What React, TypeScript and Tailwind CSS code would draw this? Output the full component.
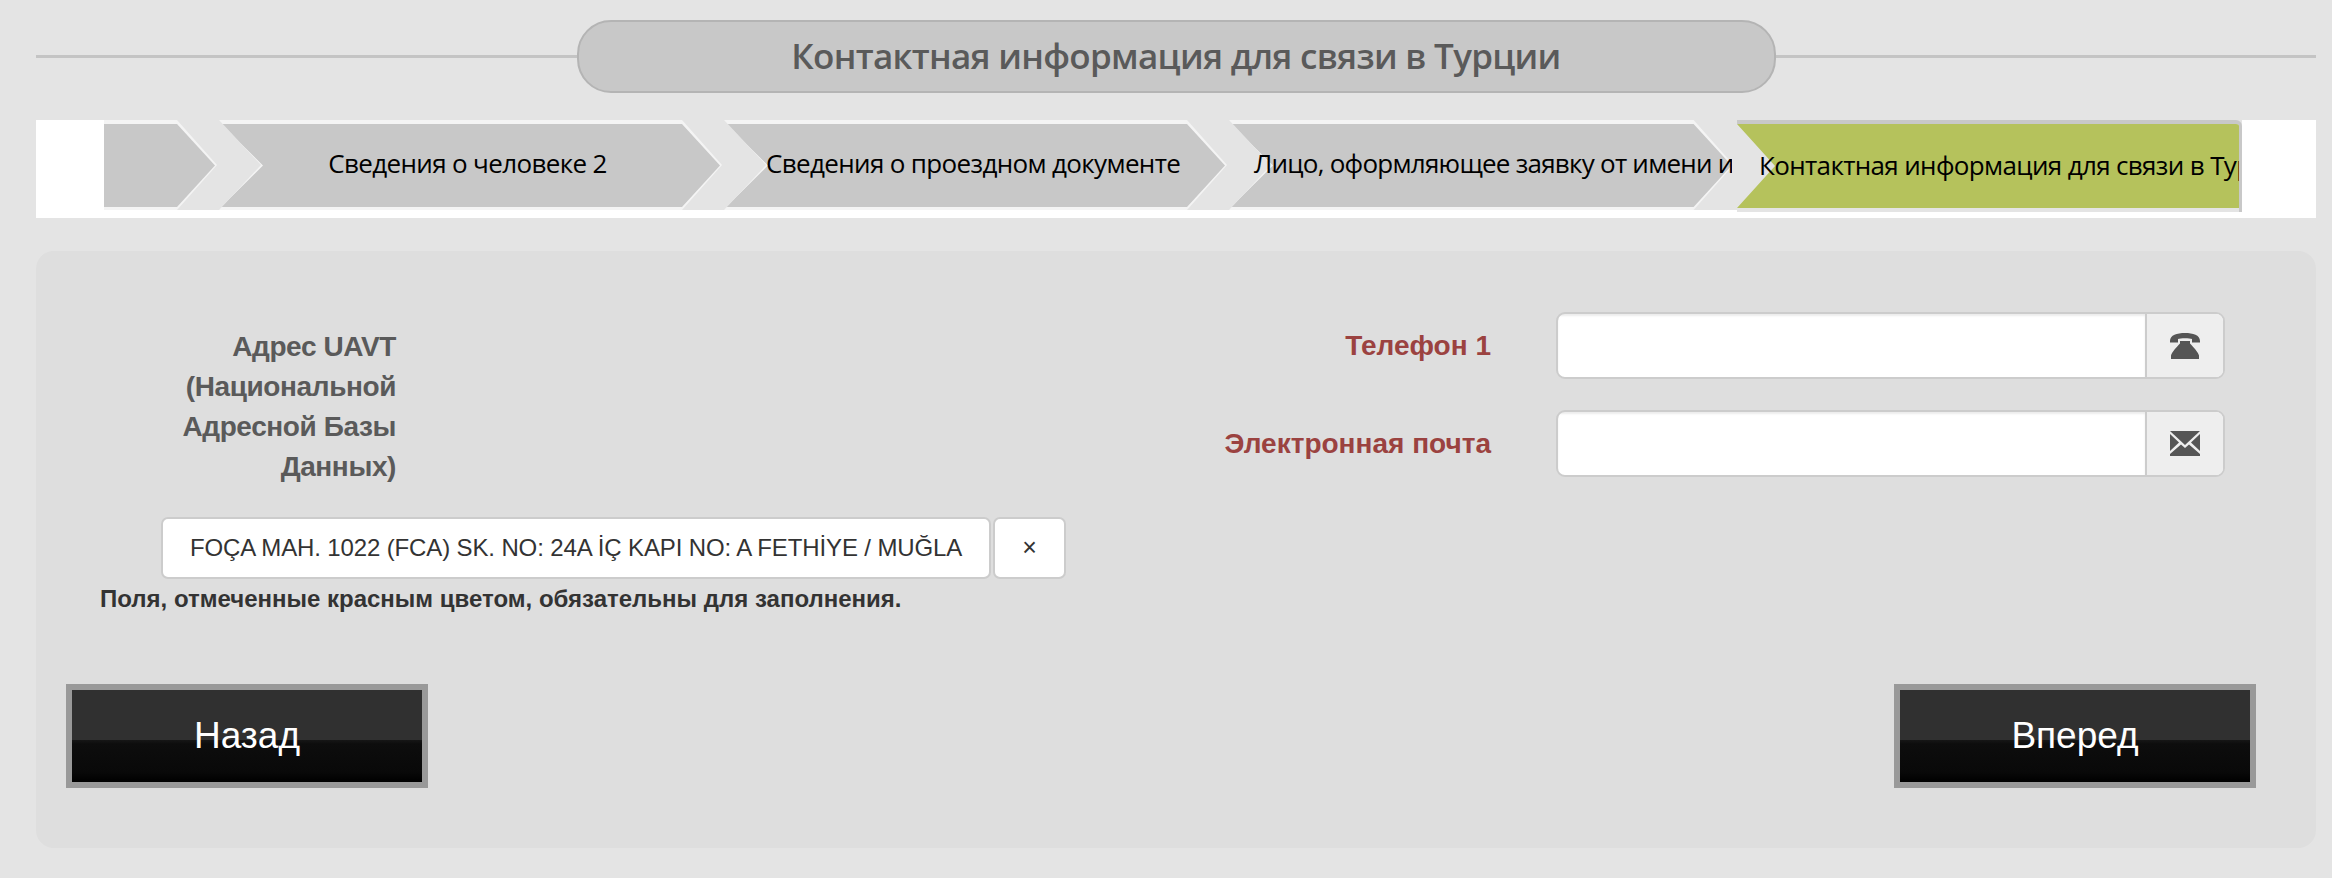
const STEPS = [
  { label: "Сведения о человеке 2", pad: "justify-center pl-[12px] pr-[18px] tracking-[-0.65px]" },
  { label: "Сведения о проездном документе", pad: "pl-[42px] tracking-[-0.65px]" },
  { label: "Лицо, оформляющее заявку от имени и", pad: "pl-[25px] tracking-[-0.75px]" },
];

function Chevron({ label, pad }: { label: string; pad: string }) {
  return (
    <div className="grid w-[503px] h-[90px] shrink-0 overflow-hidden">
      <div className="[grid-area:1/1] h-full bg-[#f4f4f4] [clip-path:polygon(0_0,calc(100%-40px)_0,100%_50%,calc(100%-40px)_100%,0_100%,42px_50%)] pt-[4px] pb-[3px]">
        <div className="h-full bg-[#c8c8c8] [clip-path:polygon(2px_0,calc(100%-40px)_0,calc(100%-2px)_50%,calc(100%-40px)_100%,2px_100%,44px_50%)]" />
      </div>
      <div
        className={`[grid-area:1/1] z-10 flex items-center pb-[3px] whitespace-nowrap text-black font-['Open_Sans',sans-serif] text-[26px] ${pad}`}
      >
        {label}
      </div>
    </div>
  );
}

function InputWithAddon({ label, icon }: { label: string; icon: React.ReactNode }) {
  return (
    <div className="flex items-center">
      <label className="w-[304px] text-right font-bold text-[28px] text-[#9b4240]">
        {label}
      </label>
      <div className="ml-[65px] flex h-[67px] w-[669px] rounded-[9px] border-2 border-[#cccccc] bg-white overflow-hidden">
        <input className="flex-1 min-w-0 shadow-[inset_0_2px_2px_rgba(0,0,0,0.08)] outline-none" />
        <div className="w-[78px] shrink-0 flex items-center justify-center bg-[#eeeeee] border-l-2 border-[#cccccc]">
          {icon}
        </div>
      </div>
    </div>
  );
}

function NavButton({ children }: { children: React.ReactNode }) {
  return (
    <button className="w-[362px] h-[104px] border-[6px] border-[#999999] text-white text-[37px] bg-[linear-gradient(to_bottom,#303030_0,#303030_50px,#161616_50px,#0d0d0d_54px,#090909_82px,#000000_92px)]">
      {children}
    </button>
  );
}

export default function App() {
  return (
    <div className="min-h-screen bg-[#e4e4e4] pt-[20px] pl-[36px] pr-[16px] font-['Liberation_Sans',Arial,sans-serif]">
      {/* Title */}
      <div className="flex items-center">
        <div className="flex-1 h-[3px] bg-[#c4c4c4]" />
        <h1 className="w-[1199px] h-[73px] shrink-0 rounded-[34px] border-2 border-[#b4b4b4] bg-[#c8c8c8] flex items-center justify-center text-[#5a5a5a] font-['Open_Sans',sans-serif] font-semibold text-[35px] tracking-[-0.7px]">
          Контактная информация для связи в Турции
        </h1>
        <div className="flex-1 h-[3px] bg-[#c4c4c4]" />
      </div>

      {/* Steps */}
      <div className="mt-[27px] h-[98px] bg-white pl-[68px] pr-[74px]">
        <div className="flex h-[92px] items-start overflow-hidden gap-[2px] bg-[linear-gradient(to_bottom,#e4e4e4_90px,#ffffff_90px)]">
          <div className="w-[113px] h-[90px] shrink-0 bg-[#f4f4f4] [clip-path:polygon(0_0,calc(100%-40px)_0,100%_50%,calc(100%-40px)_100%,0_100%)] pt-[4px] pb-[3px]">
            <div className="h-full bg-[#c8c8c8] [clip-path:polygon(0_0,calc(100%-40px)_0,calc(100%-2px)_50%,calc(100%-40px)_100%,0_100%)]" />
          </div>
          {STEPS.map((s) => (
            <Chevron key={s.label} label={s.label} pad={s.pad} />
          ))}
          {/* Active step */}
          <div className="grid flex-1 min-w-0 h-[92px] ml-[3px] overflow-hidden rounded-tr-[6px] border-t-[4px] border-r-[3px] border-[#c8c8c8] bg-[#e4e4e4]">
            <div className="[grid-area:1/1] h-[84px] bg-[#b5c25c] [clip-path:polygon(0_0,calc(100%-36px)_0,100%_50%,calc(100%-36px)_100%,0_100%,38px_50%)]" />
            <div className="[grid-area:1/1] z-10 flex h-[84px] items-center whitespace-nowrap pb-[1px] pl-[22px] text-black font-['Open_Sans',sans-serif] text-[26px] tracking-[-0.65px]">
              Контактная информация для связи в Турции
            </div>
          </div>
        </div>
      </div>

      {/* Form panel */}
      <div className="mt-[33px] h-[597px] rounded-[18px] bg-[#dedede]">
        <div className="flex h-[433px]">
          <div className="w-[1151px] shrink-0 pt-[76px]">
            <div className="ml-[120px] w-[240px] text-right font-bold text-[28px] leading-[40px] text-[#5a5a5a] tracking-[-0.4px]">
              Адрес UAVT (Национальной Адресной Базы Данных)
            </div>
            <div className="mt-[30px] ml-[125px] flex h-[62px] gap-[2px]">
              <div className="w-[830px] rounded-[7px] border-2 border-[#cccccc] bg-white flex items-center justify-center whitespace-nowrap text-[24px] text-[#333333] tracking-[-0.13px]">
                FOÇA MAH. 1022 (FCA) SK. NO: 24A İÇ KAPI NO: A FETHİYE / MUĞLA
              </div>
              <button className="w-[73px] rounded-[7px] border-2 border-[#cccccc] bg-white text-[25px] text-[#333333]">
                ×
              </button>
            </div>
            <p className="ml-[64px] mt-[6px] font-bold text-[24px] leading-[27px] text-[#333333]">
              Поля, отмеченные красным цветом, обязательны для заполнения.
            </p>
          </div>
          <div className="pt-[61px] flex flex-col gap-[31px]">
            <InputWithAddon
              label="Телефон 1"
              icon={
                <svg width="32" height="27" viewBox="0 0 32 27" fill="#555555">
                  <path d="M1 9C1 3 8 1 16 1s15 2 15 8v1.5h-8V7c-2-1-12-1-14 0v3.5H1z" />
                  <path d="M11 9h10v2.5c3 3 8 8.500 9 12V27H2v-3.500c1-3.500 6-9 9-12z" />
                </svg>
              }
            />
            <InputWithAddon
              label="Электронная почта"
              icon={
                <svg width="30" height="25" viewBox="0 0 30 25" fill="#555555">
                  <path d="M0 0h30L15 14z" />
                  <path d="M0 3l9 8.500L0 20z" />
                  <path d="M30 3l-9 8.500L30 20z" />
                  <path d="M0 25v-2l11-9.500 4 3.500 4-3.500L30 23v2z" />
                </svg>
              }
            />
          </div>
        </div>
        <div className="flex justify-between pl-[30px] pr-[60px]">
          <NavButton>Назад</NavButton>
          <NavButton>Вперед</NavButton>
        </div>
      </div>
    </div>
  );
}
